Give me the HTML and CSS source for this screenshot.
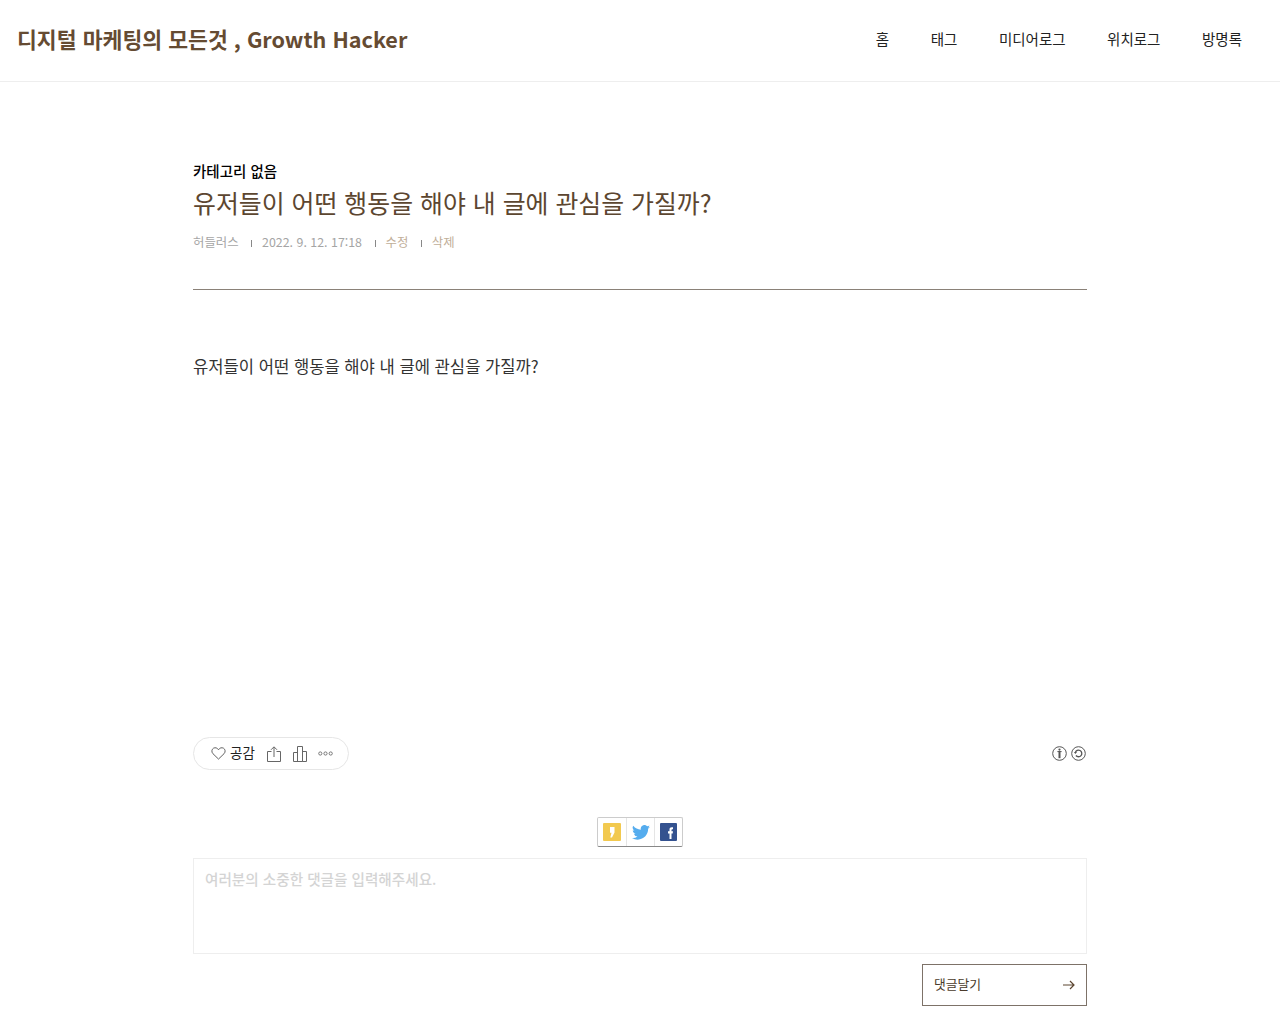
FILE: index.html
```html
<!DOCTYPE html>
<html lang="ko">
<head>
    <meta charset="UTF-8">
    <meta name="viewport" content="width=device-width, initial-scale=1.0">
    <title>유저들이 어떤 행동을 해야 내 글에 관심을 가질까?</title>
    <link rel="stylesheet" href="styles.css">
</head>
<body>

    <!-- Header -->
    <header class="site-header">
        <h1 class="site-title">디지털 마케팅의 모든것 , Growth Hacker</h1>
        <nav class="site-nav">
            <a href="#">홈</a>
            <a href="#">태그</a>
            <a href="#">미디어로그</a>
            <a href="#">위치로그</a>
            <a href="#">방명록</a>
        </nav>
    </header>

    <main class="post">
        <!-- Post title -->
        <div class="post-head">
            <div class="post-category">카테고리 없음</div>
            <h2 class="post-title">유저들이 어떤 행동을 해야 내 글에 관심을 가질까?</h2>
            <div class="post-meta">
                <span>허들러스</span>
                <i class="sep"></i>
                <span>2022. 9. 12. 17:18</span>
                <i class="sep"></i>
                <a href="#">수정</a>
                <i class="sep"></i>
                <a href="#">삭제</a>
            </div>
        </div>

        <!-- Body -->
        <div class="post-body">유저들이 어떤 행동을 해야 내 글에 관심을 가질까?</div>

        <!-- Reactions -->
        <div class="post-actions">
            <div class="action-pill">
                <svg class="icon-heart" width="15" height="13" viewBox="0 0 16 14" fill="none" stroke="#555" stroke-width="1">
                    <path d="M8 13 L2 7.2 C.2 5.3 .7 2.4 2.6 1.3 C4.6 .2 6.8 1 8 3 C9.2 1 11.4 .2 13.4 1.3 C15.3 2.4 15.8 5.3 14 7.2 Z"/>
                </svg>
                <span class="like-label">공감</span>
                <svg class="icon-share" width="14" height="16" viewBox="0 0 14 16" fill="none" stroke="#666" stroke-width="1">
                    <path d="M4.5 5.5 H.5 V15.5 H13.5 V5.5 H9.5"/>
                    <path d="M7 11 V1 M4 3.8 L7 .8 L10 3.8"/>
                </svg>
                <svg class="icon-stats" width="14" height="16" viewBox="0 0 14 16" fill="none" stroke="#666" stroke-width="1">
                    <path d="M.5 15.5 V6.5 H4.5 V15.5 M4.5 15.5 V.5 H9.5 V15.5 M9.5 15.5 V5.5 H13.5 V15.5 Z M.5 15.5 H9.5"/>
                </svg>
                <svg class="icon-more" width="15" height="5" viewBox="0 0 15 5" fill="none" stroke="#777" stroke-width="1">
                    <circle cx="2.3" cy="2.5" r="1.6"/>
                    <circle cx="7.5" cy="2.5" r="1.6"/>
                    <circle cx="12.7" cy="2.5" r="1.6"/>
                </svg>
            </div>
            <div class="license">
                <svg width="15" height="15" viewBox="0 0 15 15" fill="none" stroke="#555" stroke-width="1">
                    <circle cx="7.5" cy="7.5" r="6.8"/>
                    <circle cx="7.5" cy="3.6" r="1.1" fill="#555" stroke="none"/>
                    <path d="M7.5 5.2 V12.2" stroke-width="2"/>
                    <path d="M5.4 5.6 H9.600"/>
                </svg>
                <svg width="15" height="15" viewBox="0 0 15 15" fill="none" stroke="#555" stroke-width="1">
                    <circle cx="7.5" cy="7.5" r="6.8"/>
                    <path d="M4.3 6.6 A3.3 3.3 0 1 1 4.9 9.5" stroke-width="1.3"/>
                    <path d="M3 6 L6 6 L4.300 8 Z" fill="#555" stroke="none"/>
                </svg>
            </div>
        </div>

        <!-- Share -->
        <div class="share-row">
            <div class="share-box">
                <a class="share-item" href="#">
                    <svg width="18" height="18" viewBox="0 0 18 18">
                        <rect width="18" height="18" rx="1" fill="#f2c94f"/>
                        <path d="M7 4 H11.500 V9.500 L9 14.500 H7.300 L8.500 9.800 H7 Z" fill="#fff"/>
                    </svg>
                </a>
                <a class="share-item" href="#">
                    <svg width="18" height="15" viewBox="0 0 24 20">
                        <path fill="#55acee" d="M24 2.4a9.800 9.800 0 0 1-2.800.8A4.900 4.900 0 0 0 23.300.5a9.800 9.800 0 0 1-3.100 1.200 4.900 4.900 0 0 0-8.400 4.500A14 14 0 0 1 1.700.9a4.900 4.900 0 0 0 1.500 6.600 4.900 4.900 0 0 1-2.200-.6c0 2.400 1.700 4.400 3.900 4.900a4.900 4.900 0 0 1-2.200.1 4.900 4.900 0 0 0 4.600 3.400A9.900 9.900 0 0 1 0 17.300 14 14 0 0 0 7.500 19.500c9.100 0 14.300-7.700 14-14.600A10 10 0 0 0 24 2.400z"/>
                    </svg>
                </a>
                <a class="share-item" href="#">
                    <svg width="17" height="18" viewBox="0 0 17 18">
                        <rect width="17" height="18" rx="1" fill="#34528f"/>
                        <path d="M9.500 16 V10.500 H8 V8.300 H9.500 V6.500 C9.500 5 10.300 4.200 11.800 4.200 H13 V6.200 H12.300 C11.700 6.200 11.500 6.500 11.500 7 V8.300 H13 L12.700 10.500 H11.500 V16 Z" fill="#fff"/>
                    </svg>
                </a>
            </div>
        </div>

        <!-- Comment form -->
        <div class="comment-box">여러분의 소중한 댓글을 입력해주세요.</div>
        <div class="comment-foot">
            <button class="comment-submit" type="button">
                <span class="submit-label">댓글달기</span>
                <svg width="12" height="10" viewBox="0 0 12 10" fill="none" stroke="#5c4630" stroke-width="1.2">
                    <path d="M0 5 H11 M7 1 L11 5 L7 9"/>
                </svg>
            </button>
        </div>
    </main>

</body>
</html>
```

FILE: styles.css
```css
/* General */
* {
    box-sizing: border-box;
}
html, body {
    height: 1012px;
    overflow: hidden;
}
body {
    margin: 0;
    background-color: #fff;
    color: #333;
    font-family: "Noto Sans CJK KR", "Noto Sans", sans-serif;
}
a {
    color: inherit;
    text-decoration: none;
}

/* Header */
.site-header {
    display: flex;
    justify-content: space-between;
    align-items: center;
    height: 82px;
    padding: 0 38px 5px 17px;
    border-bottom: 1px solid #eee;
}
.site-title {
    margin: 0;
    font-size: 21.6px;
    font-weight: 700;
    color: #654b32;
}
.site-nav {
    display: flex;
    gap: 41.5px;
    font-size: 14.5px;
    color: #222;
}

/* Post */
.post {
    width: 894px;
    margin-left: 193px;
}
.post-head {
    padding-top: 78px;
    height: 208px;
    border-bottom: 1px solid #8a8178;
}
.post-category {
    font-size: 14.5px;
    font-weight: 500;
    line-height: 22px;
    color: #000;
}
.post-title {
    margin: 0;
    font-size: 24.9px;
    font-weight: 400;
    line-height: 40px;
    color: #5c4630;
}
.post-meta {
    display: flex;
    align-items: center;
    margin-top: 10px;
    font-size: 12.4px;
    line-height: 20px;
    color: #a5a5a5;
}
.post-meta a {
    color: #bfae98;
}
.sep {
    width: 1px;
    height: 7px;
    margin: 3px 10px 0 12.5px;
    background-color: #888;
}
.post-body {
    height: 447px;
    padding-top: 64px;
    font-size: 16.6px;
    line-height: 24px;
    color: #333;
}

/* Reactions */
.post-actions {
    display: flex;
    justify-content: space-between;
    align-items: center;
}
.action-pill {
    display: flex;
    align-items: center;
    width: 156px;
    height: 33px;
    padding-left: 17px;
    border: 1px solid #e6e6e6;
    border-radius: 17px;
}
.like-label {
    margin-left: 4px;
    font-size: 13.5px;
    line-height: 28px;
    color: #222;
    transform: translateY(-2px);
}
.icon-share {
    margin-left: 12px;
}
.icon-stats {
    margin-left: 12px;
}
.icon-more {
    margin-left: 11px;
}
.license {
    display: flex;
    gap: 4px;
    margin-right: 1px;
}

/* Share */
.share-row {
    display: flex;
    justify-content: center;
    margin-top: 47px;
}
.share-box {
    display: flex;
    height: 30px;
    border: 1px solid #ccc;
    border-bottom-color: #888;
    border-radius: 2px;
}
.share-item {
    display: flex;
    align-items: center;
    justify-content: center;
    width: 27.7px;
    border-left: 1px solid #e5e5e5;
}
.share-item:first-child {
    border-left: 0;
}

/* Comment form */
.comment-box {
    height: 96px;
    margin-top: 11px;
    padding: 9px 11px;
    border: 1px solid #eee;
    font-size: 14.6px;
    font-weight: 500;
    line-height: 22px;
    color: #d4d4d4;
}
.comment-foot {
    display: flex;
    justify-content: flex-end;
    margin-top: 10px;
}
.comment-submit {
    display: flex;
    justify-content: space-between;
    align-items: center;
    width: 165px;
    height: 42px;
    padding: 0 11px;
    background-color: #fff;
    border: 1px solid #7d7268;
    font-family: inherit;
    font-size: 12.8px;
    color: #4a3b2b;
}
.submit-label {
    margin-top: -3px;
}
```
